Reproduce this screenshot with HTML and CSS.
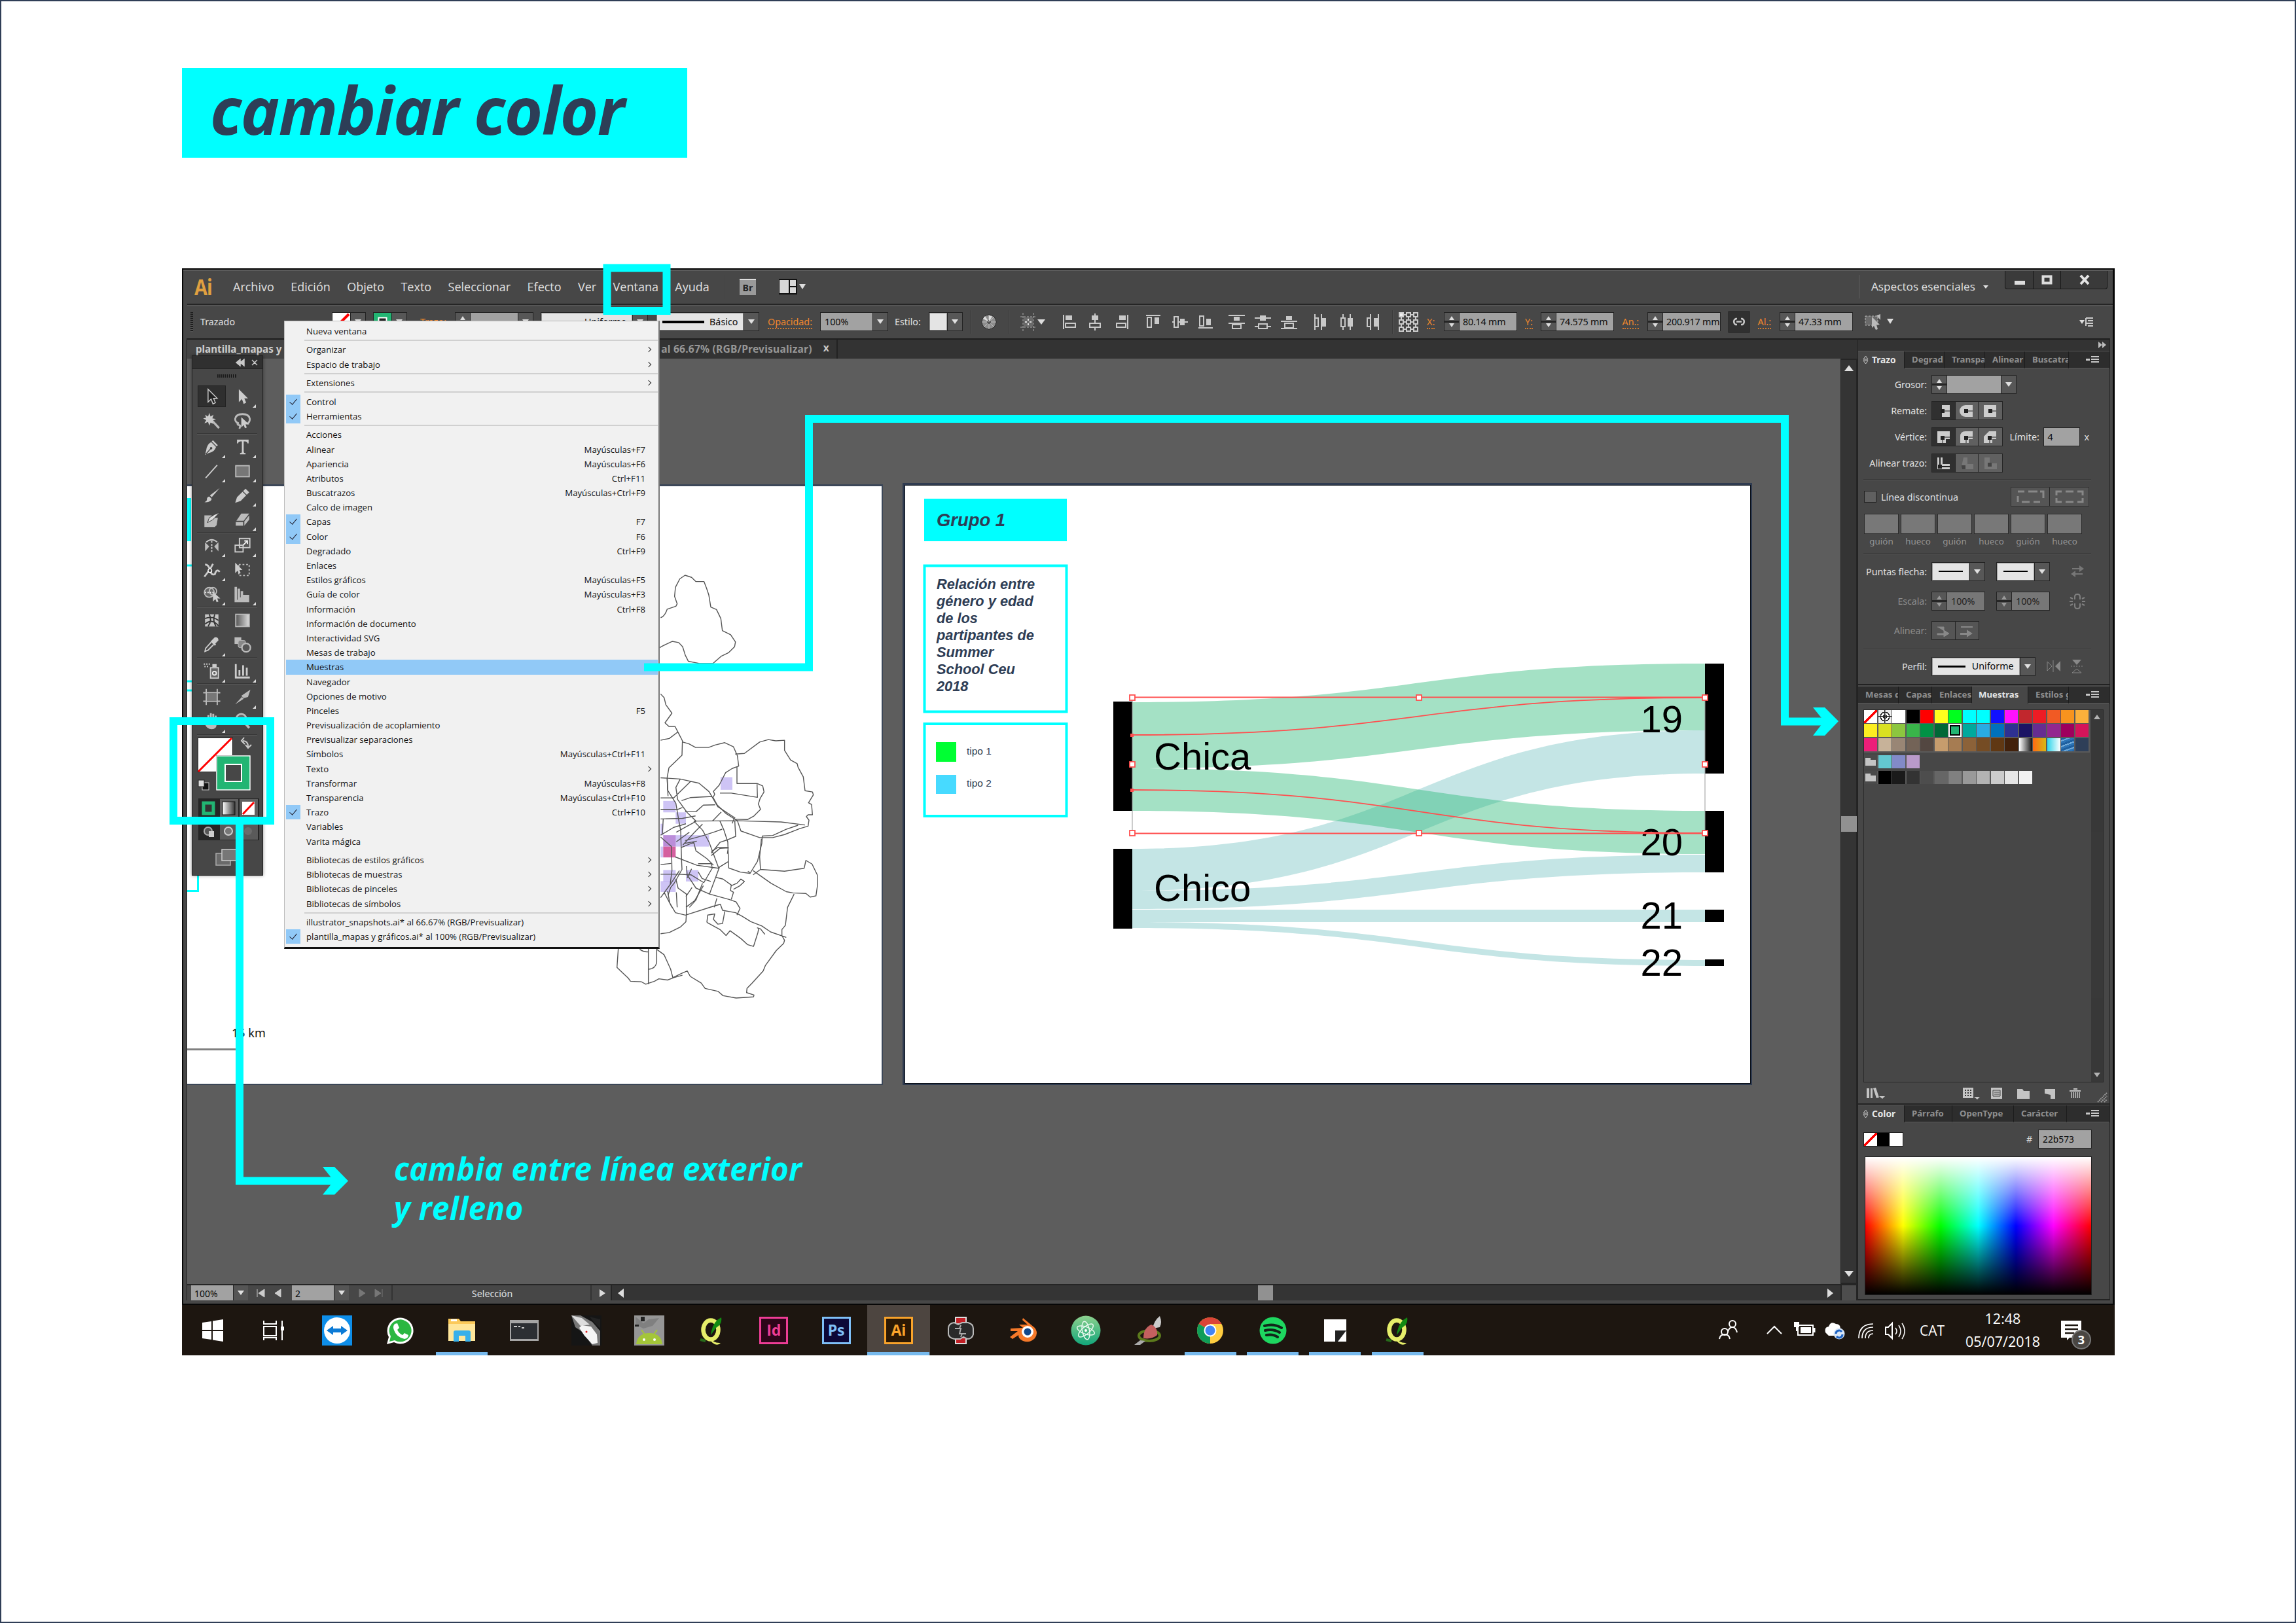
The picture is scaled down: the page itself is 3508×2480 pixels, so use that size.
FILE: index.html
```html
<!DOCTYPE html>
<html lang="es">
<head>
<meta charset="utf-8">
<title>cambiar color</title>
<link rel="stylesheet" href="styles.css">
</head>
<body>
<main class="page">
<h1 class="title"><span>cambiar color</span></h1>

<section class="app">
<div class="window">
  <header class="menubar">
    <span class="logo">Ai</span>
    <nav class="menus"><span>Archivo</span><span>Edición</span><span>Objeto</span><span>Texto</span><span>Seleccionar</span><span>Efecto</span><span>Ver</span><span>Ventana</span><span>Ayuda</span></nav>
    <i class="rule"></i>
    <span class="bridge">Br</span>
    <svg class="arrange" width="46" height="26" viewBox="0 0 46 26"><rect x="1" y="1" width="28" height="24" fill="#111"/><rect x="2" y="3" width="14" height="20" fill="#d8d8d8"/><rect x="18" y="3" width="9" height="9" fill="#d8d8d8"/><rect x="18" y="14" width="9" height="9" fill="#d8d8d8"/><path d="M32 9h10l-5 8z" fill="#ddd"/></svg>
    <div class="workspace"><span>Aspectos esenciales</span><i class="dn small"></i></div>
    <div class="winbtns">
      <svg width="43" height="28"><rect x="14" y="15" width="16" height="6" fill="#ddd"/></svg>
      <svg width="42" height="28"><rect x="14.500" y="8.500" width="12" height="10" fill="none" stroke="#ddd" stroke-width="4"/></svg>
      <svg width="72" height="28"><path d="M30 7l12 13M42 7L30 20" stroke="#e4e4e4" stroke-width="4"/></svg>
    </div>
  </header>

  <div class="control">
    <i class="grip"></i>
    <span class="lbl">Trazado</span>
    <div class="combo"><svg width="27" height="26"><rect width="27" height="26" fill="#fff"/><path d="M2 25L25 2" stroke="#f00" stroke-width="4"/></svg><b><i class="dn"></i></b></div>
    <div class="combo"><svg width="27" height="26"><rect width="27" height="26" fill="#22b573"/><rect x="7.500" y="7.500" width="12" height="12" fill="#222" stroke="#fff" stroke-width="2"/></svg><b><i class="dn"></i></b></div>
    <span class="link">Trazo:</span>
    <div class="combo w120"><u class="spin"></u><em></em><b><i class="dn"></i></b></div>
    <div class="combo w164"><em class="white"><s></s>Uniforme</em><b><i class="dn"></i></b></div>
    <div class="combo w158"><em class="white"><s class="long"></s>Básico</em><b><i class="dn"></i></b></div>
    <span class="link">Opacidad:</span>
    <div class="combo w104"><em>100%</em><b><i class="dn"></i></b></div>
    <span class="lbl">Estilo:</span>
    <div class="combo w52"><em class="white"></em><b><i class="dn"></i></b></div>
    <i class="rule"></i>
    <svg width="28" height="28" viewBox="0 0 28 28"><circle cx="14" cy="14" r="11" fill="#8d8d8d" stroke="#222"/><path d="M14 3v22M3 14h22M6 6l16 16M22 6L6 22" stroke="#bbb"/><circle cx="14" cy="14" r="3" fill="#555"/><path d="M14 14V4l5 1.500zM14 14L5 9l3-4z" fill="#ddd"/></svg>
    <i class="rule"></i>
    <svg width="44" height="28" viewBox="0 0 44 28"><path d="M7 0v28M23 0v28M3 6h24M3 22h24" stroke="#aaa" stroke-dasharray="3 2"/><rect x="8" y="7" width="14" height="14" fill="#6a6a6a"/><path d="M15 9v3M15 16v3M10 14h3M17 14h3" stroke="#ddd" stroke-width="2"/><path d="M29 10h12l-6 8z" fill="#ddd"/></svg>
    <svg class="aligns" width="500" height="28" viewBox="1616 476 500 28">
      <g fill="#c9c9c9"><rect x="1624" y="479" width="2" height="22"/><rect x="1628" y="480" width="10" height="7"/><rect x="1672" y="477" width="2" height="26"/><rect x="1668" y="480" width="10" height="7"/><rect x="1722" y="479" width="2" height="22"/><rect x="1710" y="480" width="10" height="7"/><rect x="1751" y="479" width="22" height="2"/><rect x="1764" y="483" width="7" height="10"/><rect x="1791" y="489" width="24" height="2"/><rect x="1803" y="485" width="7" height="10"/><rect x="1831" y="498" width="22" height="2"/><rect x="1843" y="485" width="7" height="10"/><rect x="1877" y="479" width="25" height="2"/><rect x="1877" y="491" width="25" height="2"/><rect x="1885" y="482" width="9" height="6"/><rect x="1917" y="483" width="25" height="2"/><rect x="1917" y="496" width="25" height="2"/><rect x="1925" y="480" width="9" height="8"/><rect x="1957" y="488" width="25" height="2"/><rect x="1957" y="499" width="25" height="2"/><rect x="1965" y="481" width="9" height="6"/><rect x="2008" y="478" width="2" height="24"/><rect x="2018" y="478" width="2" height="24"/><rect x="2020" y="484" width="6" height="13"/><rect x="2051" y="478" width="2" height="24"/><rect x="2062" y="478" width="2" height="24"/><rect x="2059" y="484" width="8" height="13"/><rect x="2093" y="478" width="2" height="24"/><rect x="2105" y="478" width="2" height="24"/><rect x="2099" y="484" width="6" height="13"/></g>
      <g fill="#474747" stroke="#c9c9c9" stroke-width="2"><rect x="1628" y="492" width="15" height="6"/><rect x="1665" y="492" width="16" height="6"/><rect x="1706" y="492" width="14" height="6"/><rect x="1753" y="483" width="6" height="15"/><rect x="1794" y="482" width="6" height="16"/><rect x="1833" y="481" width="6" height="15"/><rect x="1883" y="494" width="13" height="6"/><rect x="1923" y="493" width="13" height="7"/><rect x="1963" y="492" width="13" height="7"/><rect x="2009" y="484" width="5" height="13"/><rect x="2049" y="484" width="6" height="13"/><rect x="2089" y="484" width="5" height="13"/></g>
    </svg>
    <i class="rule"></i>
    <svg width="32" height="32" viewBox="0 0 32 32"><path d="M5 5h22v22H5zM16 5v22M5 16h22" fill="none" stroke="#ccc" stroke-width="2"/><g fill="#444" stroke="#ccc" stroke-width="2"><rect x="2" y="2" width="6" height="6" fill="#eee"/><rect x="13" y="2" width="6" height="6"/><rect x="24" y="2" width="6" height="6"/><rect x="2" y="13" width="6" height="6"/><rect x="13" y="13" width="6" height="6"/><rect x="24" y="13" width="6" height="6"/><rect x="2" y="24" width="6" height="6"/><rect x="13" y="24" width="6" height="6"/><rect x="24" y="24" width="6" height="6"/></g></svg>
    <span class="link">X:</span>
    <div class="combo w112"><u class="spin"></u><em>80.14 mm</em></div>
    <span class="link">Y:</span>
    <div class="combo w112"><u class="spin"></u><em>74.575 mm</em></div>
    <span class="link">An.:</span>
    <div class="combo w112"><u class="spin"></u><em>200.917 mm</em></div>
    <svg width="34" height="34" viewBox="0 0 34 34"><rect x="1" y="1" width="32" height="32" fill="#303030" stroke="#222"/><path d="M14 12h-2a5 5 0 0 0 0 9h2M20 12h2a5 5 0 0 1 0 9h-2M13 16.500h8" fill="none" stroke="#c8c8c8" stroke-width="2.500"/></svg>
    <span class="link">Al.:</span>
    <div class="combo w112"><u class="spin"></u><em>47.33 mm</em></div>
    <svg width="56" height="30" viewBox="0 0 56 30"><rect x="2" y="6" width="19" height="14" fill="#6a6a6a" stroke="#bbb" stroke-dasharray="3 2"/><path d="M12 7l12 12h-5l2 7-3 1-3-6-3 3zM19 5l6-2v9z" fill="#bbb"/><path d="M35 10h10l-5 8z" fill="#ddd"/></svg>
    <svg width="24" height="20" viewBox="0 0 24 20"><path d="M0 7h8l-4 6z" fill="#ddd"/><path d="M10 4h11M13 8h8M10 12h11M13 16h8M10 4v12" stroke="#ccc" stroke-width="2"/></svg>
  </div>

  <div class="main">
    <div class="doc">
      <div class="doctabs"><div class="doctab on">plantilla_mapas y</div><div class="doctab"><span>al 66.67% (RGB/Previsualizar)</span><b>x</b></div></div>
      <div class="view">
        <svg class="canvas" width="2526" height="1414" viewBox="286 548 2526 1414">
          <rect x="280" y="740" width="1069" height="918" fill="#3b4657"/>
          <rect x="280" y="743" width="1067" height="913" fill="#fff"/>
          <path d="M280 794h12" stroke="#0ff" stroke-width="66"/>
          <path d="M280 864h14M280 1041h14M280 1055h14M280 1361.500h22.500V1330" fill="none" stroke="#0ff" stroke-width="3"/>
          <path d="M280 1603.500h82" stroke="#808080" stroke-width="3"/>
          <text x="354" y="1585" class="km">15 km</text>
          <g class="map" transform="translate(900 840) scale(.33333 .45914)">
            <g fill="#8b72e8" fill-opacity=".42" stroke="none"><rect x="603" y="757" width="54" height="42"/><rect x="340" y="836" width="57" height="38"/><rect x="397" y="874" width="47" height="38"/><rect x="328" y="912" width="12" height="38"/><rect x="340" y="950" width="210" height="38"/><rect x="328" y="988" width="12" height="36"/><rect x="340" y="1066" width="57" height="38"/><rect x="444" y="1066" width="57" height="38"/><rect x="328" y="1103" width="69" height="36"/></g>
            <rect x="340" y="950" width="57" height="38" fill="#a03cb0" fill-opacity=".4" stroke="none"/><rect x="340" y="988" width="57" height="36" fill="#d5609f" stroke="none"/>
            <path d="M328 226q18-3 30-28l40-10 6-8-12-25 4-30 20-28 24-12 30 7 20 14 37 0 12 23 10 22 9 40 26 8 20 30 7 40 38 14 22 24-4 16-28 20-34 12-38 24-60 0-52-8-14-20-12-28-18-14-30-4-40 14-30 12"/>
            <path d="M328 480l16 12 8 24 28 28-32 32 18 12 28 0 20 28 14 20-2 48-34 24-26 18-8 32 2 42 38 44 14 60 8 30 4 100 2 30-34 44-18 16-12 26M328 634l40-6 40-22M430 640l28 6 30 12 60 0 30-8 44-8 40 14 18 30 6 34-30 8-30 14-30 42-26 20 6 10-8 10 20 26 40 28 52 24 16 34 86 22 60 0 54-10 70-20 38-8 4-20-12-12 8-6 20 0-4-34-14-6 22-26-4-10-34-4-8-46-24-32-4-12-30-12-28-32 0-34-40 2-34-4-40 8-70 38-42 2"/>
            <path d="M678 722l0 56 92 0 26 8 6 20-18 22-8 18 10 18-30 22-30 12-56-1M770 780l2 44-120-14-52 0M328 759l90 4 86 14 46 28 40 50 80 38M328 826l60 0 76-54M418 763l-20 28 8 40 44 44 40 28M424 835l40-10 100-4M328 864l80 0 20-6M440 872l50 0 34-22 54-1M328 896l100-2 60-8M328 950l60-26 56-12M400 940l50-20 40-16M430 983l50-40 40-30M440 968l90-18 50-12 30-8M434 978l60-8M480 903l200-1 200 4 110 10M480 903l40 30 30 40 44 86M600 903l18 30 18 40 4 86 54 14 44 4 34-40 20-60 2-24 48-2 60-20 56-14M560 1010l40-36 32-8 40-12-4-50M560 1018l40-24 38-2-4 20M566 903l40-30"/>
            <path d="M328 956l50 32M420 992l60-18 10 28 50 26 30 22M378 988l2 80-8 44M394 1022l100 28 100 10M328 1048l48-4M328 1080l80 0 60 2 58 26 40-50M446 1052l4 30 40 44 62 20 46-90 40-18M470 1062l-20 30M500 1072l18 22 40 10M360 1136l10 40 26 32 46 8 130-30 30-6 10 20 60 8 30 12 40 18 50 14 40 20 72 18M446 1216l0-70-38-20-10-30M444 1190l40-22 40-50M404 1190l-4-50M328 1278l40-4 50-18 26-18 2-24M328 1158l50-50 36-40M344 1140l36 50M472 1124l-28 30M552 1146l90 18 32 8 18 22-14 22M586 1160l-12 30M652 1164l10-24-14-6 4-18-38-20-34-6M662 1130l30-12 20-14-16-8-18 14-26 8M540 1240l4-24 32-4-6 18 20 16 22-2 10-40M540 1240l60 24 28 20 18-16 50 26 30 20 28 6 20-46 4-14M752 1082l34-18 110 6 90-10 8-26 28 12 24 36 2 30-8 40-26 4-20-12-60-2-30-4-70-28-82-42M940 1146l-30 44-10 60-16 14 0 20 12 16-4 10-34 24-50 50-10 18-50 40-24 18-2 14 34 8-2 6-80 4-60-8-22-14-60-10-18-18-50-22-14-18-26 8-40 14-10-28-30-48-34-18M786 1066l-4-44 8-60M740 1076l-12-6M770 1258l16 4 20 18"/>
            <path d="M134 1328l-6 62 14 10 38 26 10 10 50 2 20 8 40-10 20-8 40 4 28-8 40-8M232 1330q20 10 40 8M272 1328v118M310 1328v46q-6 20-36 22"/>
            <path d="M340 896l-4 50M358 760l4 60M460 940l-60 32M560 1005l30-14 50 0M666 893l-10 18M460 1190l30-24 30-56M500 1045l60 0 4 10"/>
          </g>
          <rect x="1379" y="738" width="1298" height="920" fill="#2f3b50"/>
          <rect x="1382.500" y="741.500" width="1292" height="914" fill="#fff" stroke="#0a0f18"/>
          <rect x="1412" y="762" width="218" height="65" fill="#0ff"/>
          <g class="bi"><text x="1431" y="804" font-size="27.500" textLength="105">Grupo 1</text>
          <g font-size="21.800"><text x="1431" y="900">Relación entre</text><text x="1431" y="926">género y edad</text><text x="1431" y="952">de los</text><text x="1431" y="978">partipantes de</text><text x="1431" y="1004">Summer</text><text x="1431" y="1030">School Ceu</text><text x="1431" y="1056">2018</text></g></g>
          <g fill="none" stroke="#0ff" stroke-width="4"><rect x="1412.500" y="864.500" width="217" height="223"/><rect x="1412.500" y="1106" width="217" height="141"/></g>
          <rect x="1430" y="1134" width="31" height="30" fill="#0f3"/><rect x="1430" y="1184" width="31" height="29" fill="#47daff"/>
          <g class="tipo"><text x="1477" y="1153">tipo 1</text><text x="1477" y="1202">tipo 2</text></g>
          <g fill="#6cbebe" fill-opacity=".4">
            <path d="M1730 1297C2167 1297 2167 1116 2605 1116V1182C2167 1182 2167 1361 1730 1361z"/>
            <path d="M1730 1361C2167 1361 2167 1306 2605 1306V1333C2167 1333 2167 1389 1730 1389z"/>
            <path d="M1730 1390H2605V1409H1730z"/>
            <path d="M1730 1409C2167 1409 2167 1467 2605 1467V1476C2167 1476 2167 1418 1730 1418z"/>
          </g>
          <g fill="#22b573" fill-opacity=".41">
            <path d="M1730 1073C2167 1073 2167 1014 2605 1014V1116C2167 1116 2167 1174 1730 1174z"/>
            <path d="M1730 1174C2167 1174 2167 1239 2605 1239V1305C2167 1305 2167 1239 1730 1239z"/>
          </g>
          <g fill="#000"><rect x="1701" y="1072" width="29" height="167"/><rect x="1701" y="1297" width="29" height="122"/><rect x="2605" y="1014" width="29" height="168"/><rect x="2605" y="1239" width="29" height="94"/><rect x="2605" y="1390" width="29" height="19"/><rect x="2605" y="1466" width="29" height="10"/></g>
          <g class="names"><text x="1763" y="1176">Chica</text><text x="1763" y="1377">Chico</text><g text-anchor="end"><text x="2571" y="1119">19</text><text x="2571" y="1307">20</text><text x="2571" y="1419">21</text><text x="2571" y="1491">22</text></g></g>
          <g fill="none" stroke="#ff4f4f" stroke-width="1.800"><path d="M1730 1065.500H2605M1730 1273.500H2605M1730 1123C2167 1123 2167 1066 2605 1066M1730 1207C2167 1207 2167 1273 2605 1273"/><path d="M1730 1065V1273M2605 1065V1273" stroke="#999" stroke-width="1"/>
          <g fill="#fff"><rect x="1726" y="1062" width="8" height="8"/><rect x="2164" y="1062" width="8" height="8"/><rect x="2601" y="1062" width="8" height="8"/><rect x="1726" y="1164" width="8" height="8"/><rect x="2601" y="1164" width="8" height="8"/><rect x="1726" y="1269" width="8" height="8"/><rect x="2164" y="1269" width="8" height="8"/><rect x="2601" y="1269" width="8" height="8"/></g></g>
          <rect x="1727" y="1121" width="5" height="5" fill="#ff4f4f"/><rect x="1727" y="1205" width="5" height="5" fill="#ff4f4f"/>
        </svg>
        <div class="vscroll"><i class="up"></i><b></b><i class="dn"></i></div>
      </div>
      <div class="status">
        <div class="zoomf">100%</div><b class="box"><i class="dn"></i></b>
        <svg class="nav1" width="67" height="24"><path d="M14 6v12M25 6l-9 6 9 6zM50 6l-9 6 9 6z" fill="#ccc" stroke="#ccc"/></svg>
        <div class="pagef">2</div><b class="box"><i class="dn"></i></b>
        <svg class="nav2" width="65" height="24"><path d="M16 6l9 6-9 6zM40 6l9 6-9 6zM51 6v12" fill="#777" stroke="#777"/></svg>
        <div class="mode">Selección</div>
        <svg class="nav3" width="29" height="24"><path d="M12 6l9 6-9 6z" fill="#ddd"/></svg>
        <div class="hscroll"><svg width="20" height="24"><path d="M18 5l-9 7 9 7z" fill="#ddd"/></svg><b></b><svg width="20" height="24"><path d="M0 5l9 7-9 7z" fill="#ddd"/></svg></div>
        <i class="corner"></i>
      </div>
    </div>

    <aside class="dock">
      <div class="dockbar"><svg width="14" height="10"><path d="M1 0l6 5-6 5zM7 0l6 5-6 5z" fill="#bbb"/></svg></div>
      <section class="panel stroke">
        <div class="tabs t1"><b class="on"><svg width="9" height="14"><path d="M1 6l3.500-5L8 6zM1 8l3.500 5L8 8z" fill="none" stroke="#ccc"/></svg>Trazo</b><b>Degrad</b><b>Transpa</b><b>Alinear</b><b>Buscatra</b><i class="burger"></i></div>
        <div class="prow h40"><label>Grosor:</label><div class="combo w130"><u class="spin"></u><em></em><b><i class="dn"></i></b></div></div>
        <div class="prow h40"><label>Remate:</label><div class="seg"><b class="on"><svg width="24" height="20"><path d="M10 1h12v18H10z" fill="#ccc"/><path d="M9 10h13" stroke="#222"/><rect x="8" y="7" width="6" height="6" fill="#222"/></svg></b><b><svg width="24" height="20"><path d="M10 1h11v18H10a9 9 0 0 1 0-18z" fill="#ccc"/><path d="M10 10h11" stroke="#222"/><rect x="8" y="7" width="6" height="6" fill="#222"/></svg></b><b><svg width="24" height="20"><path d="M2 1h19v18H2z" fill="#ccc"/><path d="M11 10h10" stroke="#222"/><rect x="9" y="7" width="6" height="6" fill="#222"/></svg></b></div></div>
        <div class="prow h40"><label>Vértice:</label><div class="seg"><b class="on"><svg width="24" height="20"><path d="M3 1h19v12h-6v6H3z" fill="#ccc"/><path d="M22 10H11v9" fill="none" stroke="#222"/><rect x="8" y="8" width="6" height="6" fill="#222"/></svg></b><b><svg width="24" height="20"><path d="M10 1h11v12h-6v6H2V9q0-8 8-8z" fill="#ccc"/><path d="M21 10H11v9" fill="none" stroke="#222"/><rect x="8" y="8" width="6" height="6" fill="#222"/></svg></b><b><svg width="24" height="20"><path d="M10 1h11v12h-6v6H2V9z" fill="#ccc"/><path d="M21 10H11v9" fill="none" stroke="#222"/><rect x="8" y="8" width="6" height="6" fill="#222"/></svg></b></div><span class="lim">Límite:</span><em class="fld f4">4</em><span class="x">x</span></div>
        <div class="prow h40"><label>Alinear trazo:</label><div class="seg"><b class="on"><svg width="24" height="20"><path d="M3 1h8v10h11v8H3z" fill="#ccc"/><path d="M7 1v14h15" fill="none" stroke="#222" stroke-width="2"/><rect x="4" y="12" width="6" height="6" fill="#222"/></svg></b><b><svg width="24" height="20"><path d="M7 1h6v10h9v8H3z" fill="#777"/><rect x="4" y="13" width="6" height="6" fill="#444"/></svg></b><b><svg width="24" height="20"><path d="M3 1h8v9h11v9H3z" fill="#777"/><rect x="8" y="9" width="6" height="6" fill="#444"/></svg></b></div></div>
        <hr>
        <div class="prow dash"><i class="check"></i><span>Línea discontinua</span><div class="seg off"><b><svg width="46" height="20"><path d="M4 18V9M4 2h10M20 2h14M38 2h5v10M10 18h12M28 18h10" fill="none" stroke="#888" stroke-width="3"/></svg></b><b><svg width="46" height="20"><path d="M3 8V2h8M3 12v6h8M17 2h12M17 18h12M35 2h8v6M35 18h8v-6" fill="none" stroke="#888" stroke-width="3"/></svg></b></div></div>
        <div class="gaps"><span>guión</span><span>hueco</span><span>guión</span><span>hueco</span><span>guión</span><span>hueco</span></div>
        <hr>
        <div class="prow h45"><label>Puntas flecha:</label><div class="combo w82"><em class="white"><s class="tip"></s></em><b><i class="dn"></i></b></div><div class="combo w82 second"><em class="white"><s class="tip"></s></em><b><i class="dn"></i></b></div><svg class="ic" width="24" height="24"><path d="M4 7h11V3l7 5-7 5v-4H4zM20 15H9v-4l-7 5 7 5v-4h11z" fill="#777"/></svg></div>
        <div class="prow h46 dim"><label>Escala:</label><div class="combo w82"><u class="spin"></u><em>100%</em></div><div class="combo w82 second"><u class="spin"></u><em>100%</em></div><svg class="ic" width="24" height="26"><path d="M8 10V6q0-4 4-4t4 4v4M8 16v4q0 4 4 4t4-4v-4M1 7l4 2M0 13h5M1 19l4-2M23 7l-4 2M24 13h-5M23 19l-4-2" fill="none" stroke="#808080" stroke-width="2"/></svg></div>
        <div class="prow h44 dim"><label>Alinear:</label><div class="seg"><b><svg width="24" height="20"><path d="M3 4h10v6M3 14h10v-5l8 5-8 5v-3H3z" fill="#888" stroke="#888"/></svg></b><b><svg width="24" height="20"><path d="M3 4h18M3 14h10v-4l6 4-6 4v-3H3z" fill="#888" stroke="#888" stroke-width="2"/></svg></b></div></div>
        <hr>
        <div class="prow h45"><label>Perfil:</label><div class="combo w159"><em class="white"><s class="mid"></s>Uniforme</em><b><i class="dn"></i></b></div><svg class="flip" width="60" height="24"><path d="M2 5l7 7-7 7zM11 3v18" fill="none" stroke="#888"/><path d="M22 4v16l-8-8z" fill="#888"/><path d="M40 2h14l-7 8z" fill="#888"/><path d="M38 12h18" stroke="#888" stroke-dasharray="2 2"/><path d="M40 22h14l-7-6z" fill="none" stroke="#888"/></svg></div>
      </section>

      <section class="panel swatches">
        <div class="tabs t2"><b>Mesas d</b><b>Capas</b><b>Enlaces</b><b class="on">Muestras</b><b>Estilos g</b><i class="burger"></i></div>
        <div class="swbody">
          <div class="swlist">
            <div class="grid">
              <i class="none"></i><i class="reg"></i><i style="background:#fff"></i><i style="background:#000"></i><i style="background:#f00"></i><i style="background:#ffff1e"></i><i style="background:#00ff1e"></i><i style="background:#0ff"></i><i style="background:#0ff"></i><i style="background:#1111ff"></i><i style="background:#ff11ff"></i><i style="background:#c1272d"></i><i style="background:#ed1c24"></i><i style="background:#f15a24"></i><i style="background:#f7931e"></i><i style="background:#fbb03b"></i>
              <i style="background:#fcee21"></i><i style="background:#d9e021"></i><i style="background:#8cc63f"></i><i style="background:#39b54a"></i><i style="background:#009245"></i><i style="background:#006837"></i><i class="sel"></i><i style="background:#00a99d"></i><i style="background:#29abe2"></i><i style="background:#0071bc"></i><i style="background:#2e3192"></i><i style="background:#1b1464"></i><i style="background:#662d91"></i><i style="background:#93278f"></i><i style="background:#9e005d"></i><i style="background:#d4145a"></i>
              <i style="background:#ed1e79"></i><i style="background:#c7b299"></i><i style="background:#998675"></i><i style="background:#736357"></i><i style="background:#534741"></i><i style="background:#c69c6d"></i><i style="background:#a67c52"></i><i style="background:#8c6239"></i><i style="background:#754c24"></i><i style="background:#603813"></i><i style="background:#42210b"></i><i style="background:linear-gradient(90deg,#fff,#111)"></i><i style="background:linear-gradient(90deg,#ff6a13,#d8b813)"></i><i style="background:linear-gradient(90deg,#2fd5ea,#fff)"></i><i style="background:repeating-linear-gradient(160deg,#1d5f9f 0 3px,#6fa9d8 3px 5px,#2b73b5 5px 8px)"></i><i style="background:#2e3f58"></i>
            </div>
            <div class="grid short"><i class="folder"></i><i style="background:#63c7d0"></i><i style="background:#828ac8"></i><i style="background:#b99aca"></i></div>
            <div class="grid short"><i class="folder"></i><i style="background:#000"></i><i style="background:#1a1a1a"></i><i style="background:#333"></i><i style="background:#4d4d4d"></i><i style="background:#666"></i><i style="background:#808080"></i><i style="background:#999"></i><i style="background:#b3b3b3"></i><i style="background:#ccc"></i><i style="background:#e6e6e6"></i><i style="background:#f2f2f2"></i></div>
          </div>
          <div class="swscroll"><i class="up"></i><i class="dn"></i></div>
        </div>
        <svg class="swfoot" width="384" height="28" viewBox="2840 1655 384 28">
          <g fill="#c4c4c4"><rect x="2853" y="1661" width="4" height="15"/><rect x="2859" y="1661" width="3" height="15"/><path d="M2863 1661l4-1 5 15-4 1zM2872 1673h9l-4 4z"/><rect x="3000" y="1660" width="16" height="16"/><path d="M3017 1674h9l-4 4z"/><rect x="3043" y="1660" width="17" height="17"/><path d="M3083 1662h8l2 3h9v12h-19z"/><path d="M3125 1662h16v15h-7v-6l-9-2z"/><path d="M3163 1664h17v2h-17zM3169 1661h6v2h-6z"/></g>
          <path d="M3003 1664h11M3003 1668h11M3003 1672h11" stroke="#333" stroke-width="2" stroke-dasharray="2 2"/><path d="M3046 1664h11v9h-11zM3048 1667h8M3048 1670h8" fill="none" stroke="#444"/>
          <path d="M3166 1667v9M3169 1667v9M3172 1667v9M3175 1667v9M3178 1667v9" stroke="#c4c4c4" stroke-width="1.500"/><path d="M3206 1682L3220 1668M3211 1682l9-9M3216 1682l4-4" stroke="#999" stroke-dasharray="2 1" stroke-width="2"/>
        </svg>
      </section>

      <section class="panel color">
        <div class="tabs t3"><b class="on"><svg width="9" height="14"><path d="M1 6l3.500-5L8 6zM1 8l3.500 5L8 8z" fill="none" stroke="#ccc"/></svg>Color</b><b>Párrafo</b><b>OpenType</b><b>Carácter</b><i></i><i class="burger"></i></div>
        <div class="colrow"><div class="quick"><i class="none"></i><i class="k"></i><i class="w"></i></div><span>#</span><em class="fld">22b573</em></div>
        <div class="spectrum"></div>
      </section>
    </aside>
  </div>
</div>

<footer class="taskbar">
  <div class="icons">
    <span><svg viewBox="0 0 46 46"><path d="M7 11l14-2v13H7zM23 8.500L39 6v16H23zM7 24h14v13L7 35zM23 24h16v16l-16-2.500z" fill="#fff"/></svg></span>
    <span><svg viewBox="0 0 46 46"><path d="M6 8v5h19V8M6 17h19v14H6zM6 38v-4h19v4M34 8v30" fill="none" stroke="#fff" stroke-width="2"/><rect x="32" y="17" width="5" height="6" fill="#fff"/></svg></span>
    <span><svg viewBox="0 0 46 46"><rect width="46" height="46" fill="#0e8ee9"/><circle cx="23" cy="23" r="20" fill="#fff"/><path d="M7 23l10-7v4h12v-4l10 7-10 7v-4H17v4z" fill="#0c7bd6"/></svg></span>
    <span><svg viewBox="0 0 46 46"><path d="M3 44l3-11A20 20 0 1 1 14 41z" fill="#fff"/><path d="M7 40l2-8a17 17 0 1 1 6 6z" fill="#2bb741"/><path d="M15 13l4-1 3 7-3 3q3 6 8 8l3-3 6 3q0 5-6 6-14-3-17-17 0-4 2-6z" fill="#fff"/></svg></span>
    <span class="run"><svg viewBox="0 0 46 46"><path d="M2 5h16l3 4h22v30H2z" fill="#fbc95a"/><path d="M2 13h41v26H2z" fill="#ffe69a"/><path d="M6 6h9v3H6z" fill="#fff"/><path d="M10 40V26q0-3 3-3h20q3 0 3 3v14h-8v-9H18v9z" fill="#38b0ea"/></svg></span>
    <span><svg viewBox="0 0 46 46"><rect x="1" y="7" width="44" height="32" fill="#a5a5a5"/><rect x="3" y="12" width="40" height="24" fill="#2c2f33"/><path d="M7 17h5M14 17h3M19 19h4" stroke="#ccc" stroke-width="2"/></svg></span>
    <span><svg viewBox="0 0 46 46"><rect width="46" height="46" fill="#151515"/><path d="M0 0h14l18 10 12 14v22H32L18 26 6 18z" fill="#777"/><path d="M0 0l16 4 12 10-14 2z" fill="#ddd"/><path d="M16 15l14 2 9 12 1 13-8 2-12-13-8-12z" fill="#f4f4f4"/><path d="M28 2l16 4v14L34 10z" fill="#222"/><circle cx="23" cy="25" r="1.500" fill="#d22"/></svg></span>
    <span><svg viewBox="0 0 46 46"><rect width="46" height="46" fill="#969696"/><path d="M2 2l12 10 8-6 16-2-10 12-14 4-12-6z" fill="#808080"/><path d="M10 2h6v7h-6zM1 14h6v3H1z" fill="#222"/><path d="M3 44q2-17 20-17t20 17z" fill="#a4c639"/><path d="M11 22l5 7M35 22l-5 7" stroke="#a4c639" stroke-width="2"/><circle cx="15" cy="37" r="2" fill="#fff"/><circle cx="31" cy="37" r="2" fill="#fff"/></svg></span>
    <span><svg viewBox="0 0 46 46"><ellipse cx="22" cy="22" rx="11.500" ry="14.500" fill="none" stroke="#e6ee6a" stroke-width="6.500"/><path d="M20 33q6 10 17 9-3 4-9 2-6-3-8-9" fill="#e6ee6a"/><path d="M22 30Q24 10 38 3q2 10-8 16z" fill="#128a12"/><path d="M6 37l8 2" stroke="#276b1a" stroke-width="4"/></svg></span>
    <span><b class="adobe id">Id</b></span>
    <span><b class="adobe ps">Ps</b></span>
    <span class="run active"><b class="adobe ai">Ai</b></span>
    <span><svg viewBox="0 0 46 46"><path d="M15 3h16v10H15zM15 34h16v9H15z" fill="#c22026" stroke="#ddd" stroke-width="2"/><path d="M4 20q0-8 9-9l6 3 6-3h9q8 2 8 9v9q-2 7-9 7l-6-3-5 3h-9q-9-2-9-8z" fill="#2a2a2a" stroke="#bbb" stroke-width="2"/><path d="M14 20h9l-2 8h10M23 15l-2 5M25 28l-2 5" stroke="#aaa" stroke-width="2" fill="none"/></svg></span>
    <span><svg viewBox="0 0 46 46"><path d="M22 4l18 15q6 8 0 16-8 8-18 4-7-3-7-9L6 36l-4-3 12-9H3v-4l19-1-6-5h13l-8-7z" fill="#f5792a"/><circle cx="29" cy="25" r="9" fill="#fff"/><circle cx="29" cy="25" r="5.500" fill="#12488c"/></svg></span>
    <span><svg viewBox="0 0 46 46"><defs><linearGradient id="at" x2="0" y2="1"><stop stop-color="#8dd18e"/><stop offset="1" stop-color="#12a67a"/></linearGradient></defs><circle cx="23" cy="23" r="22.500" fill="url(#at)"/><g fill="none" stroke="#e8f8ee" stroke-width="1.500"><ellipse cx="23" cy="23" rx="14" ry="5.500" transform="rotate(20 23 23)"/><ellipse cx="23" cy="23" rx="14" ry="5.500" transform="rotate(80 23 23)"/><ellipse cx="23" cy="23" rx="14" ry="5.500" transform="rotate(140 23 23)"/></g><circle cx="23" cy="23" r="2" fill="#fff"/></svg></span>
    <span><svg viewBox="0 0 46 46"><ellipse cx="25" cy="31" rx="16" ry="8" fill="none" stroke="#5c7a1c" stroke-width="4"/><path d="M41 1q4 10 0 17l-11 2q2-12 11-19z" fill="#ccc"/><path d="M28 14q10 4 9 16-8 7-21 5 0-16 12-21z" fill="#c4605f"/><path d="M2 45l9-7 8 1-8 6z" fill="#aaa"/></svg></span>
    <span class="run"><svg viewBox="0 0 46 46"><circle cx="23" cy="23" r="20" fill="#ffcd40"/><path d="M23 23L5.700 13A20 20 0 0 1 40.300 13H23z" fill="#db4437"/><path d="M23 23l0 20A20 20 0 0 1 5.700 13z" fill="#0f9d58"/><path d="M23 23h8l-8 20z" fill="#ffcd40"/><circle cx="23" cy="23" r="9.500" fill="#fff"/><circle cx="23" cy="23" r="7.500" fill="#4285f4"/></svg></span>
    <span class="run"><svg viewBox="0 0 46 46"><circle cx="23" cy="23" r="20.500" fill="#1ed760"/><path d="M10 16q14-4 26 3M11 23q12-3 22 3M13 30q10-2 17 3" fill="none" stroke="#11271a" stroke-width="4" stroke-linecap="round"/></svg></span>
    <span class="run"><svg viewBox="0 0 46 46"><path d="M6 6h34v34H6z" fill="#fff"/><path d="M23 23h17L27 40h-4z" fill="#222"/></svg></span>
    <span class="run"><svg viewBox="0 0 46 46"><ellipse cx="22" cy="22" rx="11.500" ry="14.500" fill="none" stroke="#e6ee6a" stroke-width="6.500"/><path d="M20 33q6 10 17 9-3 4-9 2-6-3-8-9" fill="#e6ee6a"/><path d="M22 30Q24 10 38 3q2 10-8 16z" fill="#128a12"/><path d="M6 37l8 2" stroke="#276b1a" stroke-width="4"/></svg></span>
  </div>
  <svg class="tray" width="300" height="77" viewBox="2630 1994 300 77">
    <g fill="none" stroke="#fff" stroke-width="2"><circle cx="2652" cy="2023" r="5"/><circle cx="2640" cy="2035" r="5"/><path d="M2645 2035q2-7 7-7t7 8M2632 2046q1-7 8-7t8 7"/><path d="M2705 2038l11-11 11 11"/><rect x="2752" y="2025" width="23" height="15"/><path d="M2777 2029v7" stroke-width="3"/><path d="M2845 2045q0-22 22-22M2850 2045q0-17 17-17M2855 2045q0-12 12-12M2860 2045q0-7 7-7" stroke-width="1.700"/><path d="M2886 2028h4l6-6v23l-6-6h-4z"/><path d="M2901 2029q4 5 0 10M2906 2025q6 9 0 18M2911 2022q8 12 0 24" stroke-width="1.500"/></g>
    <rect x="2756" y="2028" width="16" height="9" fill="#fff"/><path d="M2746 2020h8v8h-3v6h-2v-6h-3z" fill="#fff"/><path d="M2794 2036q-2-8 5-9 3-9 11-4 8 0 7 10v8h-18z" fill="#fff"/><circle cx="2815" cy="2038" r="8.500" fill="#d9e6f7"/><path d="M2810 2038a5 5 0 0 1 9-3M2820 2039a5 5 0 0 1-9 3" stroke="#1d63c4" stroke-width="3" fill="none"/>
  </svg>
  <span class="lang">CAT</span>
  <div class="clock"><span>12:48</span><span>05/07/2018</span></div>
  <div class="notif"><svg width="34" height="30"><path d="M1 0h31v26H14l-4 4v-4H1z" fill="#fff"/><path d="M7 7h20M7 13h20M7 19h14" stroke="#1d1710" stroke-width="2.500"/></svg><b>3</b></div>
</footer>
</section>

<div class="tools">
  <div class="toolhead"><svg width="42" height="12"><path d="M9 1L3 6l6 5zM15 1L9 6l6 5zM27 2l8 8M35 2l-8 8" fill="#c8c8c8" stroke="#c8c8c8" stroke-width="1.500"/></svg></div>
  <i class="grip2"></i>
  <div class="tg">
    <span class="on"><svg viewBox="0 0 30 30"><path d="M9 3v21l5-5 3 8 4-2-3-7h6z" fill="#222" stroke="#ccc" stroke-width="1.500"/></svg></span>
    <span class="f"><svg viewBox="0 0 30 30"><path d="M9 3v21l5-5 3 8 4-2-3-7h6z" fill="#ccc"/></svg></span>
    <span><svg viewBox="0 0 30 30"><path d="M14 13l13 14" stroke="#bbb" stroke-width="3.500"/><path d="M11 2l2 6 5-3-2 6 6 1-6 3 2 5-5-2-2 5-2-6-6 2 3-5-5-3 5-1-2-5 5 3z" fill="#ccc"/></svg></span>
    <span><svg viewBox="0 0 30 30"><path d="M9 20q-6-3-6-8 1-8 12-8t12 8q0 5-4 8M8 17q-3 5 2 5 2 0 0 6" fill="none" stroke="#bbb" stroke-width="3"/><path d="M13 9v17l4-4 2 5 3-1-2-5h6z" fill="#ccc"/></svg></span>
  </div><hr>
  <div class="tg">
    <span class="f"><svg viewBox="0 0 30 30"><path d="M17 4l8 8-2 2-8-8zM14 7l8 8q-2 8-12 10l-6 3 2-8q1-9 8-13z" fill="#ccc"/><path d="M5 27l9-10" stroke="#444" stroke-width="1.500"/><circle cx="14" cy="17" r="2" fill="#444"/></svg></span>
    <span class="f"><svg viewBox="0 0 30 30"><path d="M6 3h19v6h-2q0-3-4-3h-2v17q0 2 3 2v2h-9v-2q3 0 3-2V6h-2q-4 0-4 3H6z" fill="#ccc"/></svg></span>
    <span class="f"><svg viewBox="0 0 30 30"><path d="M5 26L24 5" stroke="#ccc" stroke-width="2"/></svg></span>
    <span class="f"><svg viewBox="0 0 30 30"><rect x="4" y="6" width="22" height="18" fill="#777" stroke="#bbb" stroke-width="2"/></svg></span>
    <span><svg viewBox="0 0 30 30"><path d="M28 3L15 18l-3-3zM11 17l4 4q-2 6-12 5 5-2 4-5 1-4 4-4z" fill="#ccc"/></svg></span>
    <span class="f"><svg viewBox="0 0 30 30"><path d="M20 4l6 6-4 4-6-6zM15 9l6 6-9 9-9 3 3-9z" fill="#ccc"/></svg></span>
    <span><svg viewBox="0 0 30 30"><path d="M3 8h12v4l10 0-2 12-3 3H3z" fill="#bbb"/><path d="M28 3L17 15l-9 5 3-8 8-5z" fill="#ddd" stroke="#333"/></svg></span>
    <span class="f"><svg viewBox="0 0 30 30"><path d="M13 5h13l-9 12H5zM4 19h12v6H4zM18 18l8-10v7l-8 10z" fill="#bbb"/></svg></span>
  </div><hr>
  <div class="tg">
    <span class="f"><svg viewBox="0 0 30 30"><path d="M4 9l7 7-7 8zM26 9l-7 7 7 8z" fill="#bbb"/><path d="M15 7v20" stroke="#ccc" stroke-width="2" stroke-dasharray="3 2"/><path d="M6 9q9-8 18 0" fill="none" stroke="#ccc" stroke-width="2"/></svg></span>
    <span class="f"><svg viewBox="0 0 30 30"><rect x="10" y="3" width="17" height="15" fill="#555" stroke="#ccc" stroke-width="2"/><rect x="3" y="14" width="13" height="11" fill="none" stroke="#ccc" stroke-width="2"/><path d="M16 14l7-7m-5 0h5v5" fill="none" stroke="#eee" stroke-width="2"/></svg></span>
    <span class="f"><svg viewBox="0 0 30 30"><path d="M3 26l9-12 5-9M4 6q6 0 8 9t8 7q3-10 8-4" fill="none" stroke="#ccc" stroke-width="3"/><circle cx="12" cy="16" r="3" fill="#444" stroke="#fff" stroke-width="1.500"/></svg></span>
    <span><svg viewBox="0 0 30 30"><rect x="9" y="6" width="17" height="18" fill="none" stroke="#bbb" stroke-width="2" stroke-dasharray="3 3"/><path d="M3 3v17l4-4 2 5 3-1-2-5h5z" fill="#ccc"/></svg></span>
    <span class="f"><svg viewBox="0 0 30 30"><circle cx="11" cy="12" r="8" fill="#666" stroke="#bbb" stroke-width="2"/><circle cx="17" cy="10" r="6" fill="none" stroke="#bbb" stroke-width="2"/><path d="M4 12h14" stroke="#eee" stroke-width="2" stroke-dasharray="2 2"/><path d="M17 11v16l4-4 2 5 3-1-2-5h5z" fill="#ccc"/></svg></span>
    <span class="f"><svg viewBox="0 0 30 30"><path d="M4 3v23h22M9 6v16h17M14 10v8h12" fill="none" stroke="#bbb" stroke-width="4"/></svg></span>
  </div><hr>
  <div class="tg">
    <span><svg viewBox="0 0 30 30"><rect x="4" y="5" width="22" height="20" fill="#c4c4c4"/><path d="M4 12q11-5 22 3M4 21q12-10 22 3M11 5q5 10-2 20M20 5q-4 10 2 20" fill="none" stroke="#333" stroke-width="2"/></svg></span>
    <span><svg viewBox="0 0 30 30"><defs><linearGradient id="gr"><stop stop-color="#555"/><stop offset="1" stop-color="#ddd"/></linearGradient></defs><rect x="4" y="5" width="22" height="20" fill="url(#gr)" stroke="#bbb" stroke-width="2"/></svg></span>
    <span class="f"><svg viewBox="0 0 30 30"><path d="M20 3q6-1 6 5l-5 5 1 2-2 2-7-7 2-2z" fill="#ccc"/><path d="M14 11L5 21l-1 5 5-2 9-9" fill="none" stroke="#ccc" stroke-width="2"/></svg></span>
    <span><svg viewBox="0 0 30 30"><rect x="2" y="3" width="11" height="11" fill="#bbb"/><rect x="8" y="8" width="12" height="12" rx="3" fill="#888" stroke="#bbb"/><circle cx="21" cy="20" r="7" fill="#555" stroke="#bbb" stroke-width="2.500"/></svg></span>
  </div><hr>
  <div class="tg">
    <span class="f"><svg viewBox="0 0 30 30"><rect x="13" y="10" width="13" height="17" fill="#666" stroke="#ccc" stroke-width="2"/><rect x="16" y="4" width="7" height="5" fill="#ccc"/><circle cx="19.500" cy="19" r="3" fill="none" stroke="#eee" stroke-width="2"/><path d="M2 4h10M3 8h8" stroke="#ccc" stroke-width="2" stroke-dasharray="2 2"/></svg></span>
    <span class="f"><svg viewBox="0 0 30 30"><path d="M4 4v22h23M10 23V14M16 23V6M22 23V10" fill="none" stroke="#ccc" stroke-width="3"/></svg></span>
  </div><hr>
  <div class="tg">
    <span><svg viewBox="0 0 30 30"><path d="M1 8h28M1 22h28M6 2v26M24 2v26" stroke="#bbb" stroke-width="2"/><rect x="7" y="9" width="16" height="12" fill="#777"/></svg></span>
    <span class="f"><svg viewBox="0 0 30 30"><path d="M28 3l-4 12-7 2-4-4zM14 15l3 3L3 27z" fill="#bbb"/></svg></span>
    <span class="f"><svg viewBox="0 0 30 30"><path d="M8 14V5h3v8h1V2h3v11h1V3h3v11h1V6h3v14q0 8-8 8t-11-8l-3-5 3-1z" fill="#bbb"/></svg></span>
    <span><svg viewBox="0 0 30 30"><circle cx="13" cy="11" r="8" fill="#666" stroke="#bbb" stroke-width="3"/><path d="M18 17l8 9" stroke="#bbb" stroke-width="4"/></svg></span>
  </div><hr>
  <svg class="fillstroke" width="109" height="213" viewBox="293 1124 109 213">
    <rect x="302.500" y="1128.500" width="53" height="52" fill="#fff" stroke="#222"/><path d="M303 1180L354 1129" stroke="#f00" stroke-width="3"/>
    <path d="M330 1155h53v54h-53zM344 1169v26h26v-26z" fill="#222" fill-rule="evenodd"/><rect x="331" y="1156" width="51" height="52" fill="#22b573" stroke="#fff" stroke-width="1.500"/><rect x="344" y="1169" width="25" height="26" fill="#474747" stroke="#fff" stroke-width="2"/>
    <path d="M371 1133q8 0 8 9M373 1128l-4 5 5 5M375 1139l4 5 5-5" fill="none" stroke="#ccc" stroke-width="2"/>
    <rect x="309" y="1197" width="10" height="11" fill="#111" stroke="#ccc"/><rect x="303" y="1193" width="9" height="10" fill="#ddd" stroke="#222"/>
    <rect x="303" y="1221" width="93" height="29" fill="#262626"/><rect x="336" y="1222" width="28" height="27" fill="#606060"/><rect x="366" y="1222" width="28" height="27" fill="#606060"/>
    <rect x="311" y="1228" width="15" height="16" fill="#333" stroke="#22b573" stroke-width="5"/><rect x="340" y="1226" width="19" height="20" fill="url(#gr2)" stroke="#111"/><rect x="370" y="1226" width="19" height="20" fill="#fff"/><path d="M371 1245l17-18" stroke="#f00" stroke-width="3"/>
    <defs><linearGradient id="gr2"><stop stop-color="#fff"/><stop offset="1" stop-color="#333"/></linearGradient></defs>
    <rect x="303" y="1257" width="93" height="28" fill="#262626"/><rect x="336" y="1257" width="28" height="27" fill="#5a5a5a"/><rect x="366" y="1257" width="28" height="27" fill="#5a5a5a"/>
    <circle cx="318" cy="1271" r="6" fill="#555" stroke="#aaa" stroke-width="2"/><rect x="319" y="1271" width="8" height="9" fill="#ccc"/><circle cx="349" cy="1271" r="6" fill="#777" stroke="#ccc" stroke-width="2"/><circle cx="379" cy="1271" r="6" fill="#6c6c6c"/>
    <rect x="330" y="1305" width="22" height="18" fill="#6a6a6a" stroke="#aaa" stroke-width="1.500"/><rect x="339" y="1299" width="24" height="17" fill="#777" stroke="#ccc" stroke-width="1.500"/>
  </svg>
</div>

<ul class="dropdown">
<li>Nueva ventana</li><li class="sep line"></li>
<li class="sub">Organizar</li><li class="sub">Espacio de trabajo</li><li class="sep line"></li>
<li class="sub">Extensiones</li><li class="sep line"></li>
<li class="ck">Control</li><li class="ck">Herramientas</li><li class="sep line"></li>
<li>Acciones</li>
<li>Alinear<kbd>Mayúsculas+F7</kbd></li>
<li>Apariencia<kbd>Mayúsculas+F6</kbd></li>
<li>Atributos<kbd>Ctrl+F11</kbd></li>
<li>Buscatrazos<kbd>Mayúsculas+Ctrl+F9</kbd></li>
<li>Calco de imagen</li>
<li class="ck">Capas<kbd>F7</kbd></li>
<li class="ck">Color<kbd>F6</kbd></li>
<li>Degradado<kbd>Ctrl+F9</kbd></li>
<li>Enlaces</li>
<li>Estilos gráficos<kbd>Mayúsculas+F5</kbd></li>
<li>Guía de color<kbd>Mayúsculas+F3</kbd></li>
<li>Información<kbd>Ctrl+F8</kbd></li>
<li>Información de documento</li>
<li>Interactividad SVG</li>
<li>Mesas de trabajo</li>
<li class="hot">Muestras</li>
<li>Navegador</li>
<li>Opciones de motivo</li>
<li>Pinceles<kbd>F5</kbd></li>
<li>Previsualización de acoplamiento</li>
<li>Previsualizar separaciones</li>
<li>Símbolos<kbd>Mayúsculas+Ctrl+F11</kbd></li>
<li class="sub">Texto</li>
<li>Transformar<kbd>Mayúsculas+F8</kbd></li>
<li>Transparencia<kbd>Mayúsculas+Ctrl+F10</kbd></li>
<li class="ck">Trazo<kbd>Ctrl+F10</kbd></li>
<li>Variables</li>
<li>Varita mágica</li><li class="sep"></li>
<li class="sub">Bibliotecas de estilos gráficos</li>
<li class="sub">Bibliotecas de muestras</li>
<li class="sub">Bibliotecas de pinceles</li>
<li class="sub">Bibliotecas de símbolos</li><li class="sep line"></li>
<li>illustrator_snapshots.ai* al 66.67% (RGB/Previsualizar)</li>
<li class="ck">plantilla_mapas y gráficos.ai* al 100% (RGB/Previsualizar)</li>
</ul>

<svg class="callouts" width="3508" height="2480" viewBox="0 0 3508 2480">
  <g fill="none" stroke="#0ff" stroke-width="12">
    <rect x="927.500" y="409.500" width="91" height="65.500"/>
    <rect x="265" y="1102" width="148" height="152"/>
    <path d="M366 1258V1804.500H522"/>
    <path d="M984 1019.500H1236V640H2727V1102.500H2796"/>
  </g>
  <path d="M493 1783h18l21 21.500-21 21H493l17-21zM2770 1081h18l21 21-21 22h-18l17-22z" fill="#0ff"/>
</svg>
<p class="note"><span>cambia entre línea exterior</span><br><span>y relleno</span></p>
</main>
</body>
</html>
```
FILE: styles.css
```css
* { box-sizing: border-box; }
body { margin: 0; background: #fff; font-family: "Noto Sans", "Open Sans", sans-serif; }
ul, p, h1 { margin: 0; padding: 0; }
i, em, kbd { font-style: normal; font-family: inherit; }
u, s { text-decoration: none; }
svg { display: block; flex: none; }

.page { position: relative; width: 3508px; height: 2480px; overflow: hidden; border: 2px solid #2f3e57; padding: 102px 0 0 276px; }
.title { width: 772px; height: 137px; background: #0ff; color: #2d3e57; padding-left: 43px; font: italic 700 100px/126px "Open Sans", sans-serif; letter-spacing: -1.500px; white-space: nowrap; }

.app { width: 2953px; height: 1661px; margin-top: 169px; display: flex; flex-direction: column; }
.window { height: 1584px; background: #474747; border: solid #070707; border-width: 2px 3px 2px 2px; display: flex; flex-direction: column; color: #e0e0e0; font-size: 14.300px; }

.menubar { height: 52px; display: flex; align-items: center; border-top: 2px solid #5c5c5c; font: 18px/24px "Open Sans", sans-serif; position: relative; padding-bottom: 2px; }
.logo { width: 58px; margin-left: 17px; font: 700 34px/40px "Open Sans", sans-serif; letter-spacing: -1px; color: #e0a040; transform: scaleX(.85); transform-origin: 0 50%; }
.menus { display: flex; gap: 25.400px; width: 750px; margin-left: 1px; white-space: nowrap; }
.rule { width: 2px; height: 36px; background: #3a3a3a; border-right: 1px solid #555; display: block; flex: none; }
.bridge { width: 25px; height: 25px; margin-left: 22px; background: #9a9a9a; border-top: 2px solid #ddd; color: #222; font: 700 14px/24px "Open Sans", sans-serif; text-align: center; }
.arrange { margin-left: 34px; }
.workspace { margin-left: auto; margin-right: 20px; height: 36px; width: 203px; border-left: 1px solid #606060; padding-left: 18px; display: flex; align-items: center; gap: 12px; font-size: 17.200px; white-space: nowrap; }
.winbtns { align-self: flex-start; display: flex; height: 28px; width: 157px; margin-right: 8px; background: #3a3a3a; border: 1px solid #181818; border-top: 0; border-radius: 0 0 4px 4px; overflow: hidden; }
.winbtns svg { border-right: 1px solid #181818; }

.dn, .up { display: block; width: 0; height: 0; border: 5px solid transparent; flex: none; }
.dn { border-top: 7px solid #e0e0e0; border-bottom: 0; }
.up { border-bottom: 7px solid #e0e0e0; border-top: 0; }
.dn.small { border-width: 5px 4px 0; }

.control { height: 53px; border-top: 2px solid #252525; box-shadow: inset 0 2px #565656; margin-left: 6px; padding-left: 5px; display: grid; align-items: center; white-space: nowrap;
  grid-template-columns: 15px 201px 63px 72px 53px 131px 176px 171px 80px 114px 52px 63px 15px 43px 16px 60px 511px 9px 44px 26px 124px 24px 124.500px 38.500px 123px 45.500px 33.500px 129px 329px 40px; }
.grip { width: 4px; height: 30px; background: repeating-linear-gradient(#1e1e1e 0 2px, #555 2px 3px); }
.link { color: #f0882d; font-size: 14.300px; border-bottom: 2px dotted #d0782d; justify-self: start; line-height: 19px; margin-top: 2px; }
.combo { display: flex; height: 29px; width: 52px; border: 1.500px solid #232323; flex: none; }
.combo em, .fld { background: #a2a2a2; color: #0a0a0a; flex: 1; padding-left: 6px; font-size: 14.300px; line-height: 26px; display: flex; align-items: center; overflow: hidden; white-space: nowrap; }
.combo em.white { background: #e4e4e4; justify-content: space-evenly; padding: 0; box-shadow: inset 0 0 0 1px #999; }
.combo > b { width: 23px; background: #575757; border-left: 1.500px solid #232323; display: flex; align-items: center; justify-content: center; flex: none; }
.combo s { width: 48px; height: 4px; background: #000; }
.combo s.long { width: 64px; }
.combo s.tip { width: 37px; height: 2px; }
.combo s.mid { width: 42px; height: 3px; }
.w52 { width: 52px; } .w82 { width: 82px; } .w104 { width: 104px; } .w112 { width: 112px; } .w120 { width: 120px; } .w130 { width: 130px; } .w158 { width: 158px; } .w159 { width: 159px; } .w164 { width: 164px; }
.w112 em { padding-left: 5px; letter-spacing: -.2px; }
.spin { width: 23px; flex: none; background: linear-gradient(#575757 0 46%, #262626 46% 54%, #575757 54%); border-right: 1.500px solid #262626; display: flex; flex-direction: column; justify-content: space-evenly; align-items: center; }
.spin::before, .spin::after { content: ""; border: 4.500px solid transparent; }
.spin::before { border-bottom: 6px solid #ddd; border-top: 0; }
.spin::after { border-top: 6px solid #ddd; border-bottom: 0; }

.main { display: flex; height: 1470px; margin-left: 5px; }
.doc { width: 2553px; flex: none; border-left: 1px solid #222; }
.doctabs { height: 31px; background: #333; border-top: 2px solid #1f1f1f; display: flex; font: 700 15px/29px "Noto Sans", sans-serif; white-space: nowrap; }
.doctab { width: 994px; padding-right: 11px; border-right: 2px solid #222; }
.doctab.on { width: 480px; flex: none; overflow: hidden; background: #454545; color: #ccc; padding-left: 13px; font-size: 15.200px; }
.doctab:last-child { width: 514px; color: #969696; display: flex; justify-content: flex-end; gap: 17px; font-size: 15.600px; letter-spacing: .200px; }
.doctab:last-child b { color: #ccc; font-weight: 700; line-height: 25px; margin-right: 0; }
.view { display: flex; height: 1414px; }
.canvas { background: #5d5d5d; }
.canvas text { white-space: pre; }
.km { font: 18px "Noto Sans", sans-serif; fill: #111; }
.map path { fill: none; stroke: #555; stroke-width: 1.400px; vector-effect: non-scaling-stroke; stroke-linejoin: round; }
.bi { font-family: "Liberation Sans", sans-serif; font-weight: 700; font-style: italic; fill: #2e3d55; }
.tipo { font: 15.500px "Liberation Sans", sans-serif; fill: #2e3d55; }
.names { font: 58px "Liberation Sans", sans-serif; fill: #000; }
.vscroll { width: 26px; background: #343434; border: solid #252525; border-width: 2px 2px 2px 1px; display: flex; flex-direction: column; align-items: center; padding: 8px 0 9px; }
.vscroll .up, .vscroll .dn { border-left-width: 7px; border-right-width: 7px; border-top-width: 0; border-bottom-width: 9px; }
.vscroll .dn { border-top-width: 9px; border-bottom-width: 0; }
.vscroll b { width: 24px; height: 24px; background: #919191; margin: 680px 0 auto; }

.status { display: flex; height: 25px; border-top: 2px solid #252525; align-items: stretch; line-height: 26px; }
.zoomf, .pagef { background: #a2a2a2; color: #0a0a0a; padding-left: 5px; width: 64px; margin-left: 6px; flex: none; font-size: 14px; }
.pagef { margin-left: 0; }
.box { width: 23px; background: #555; display: flex; align-items: center; justify-content: center; flex: none; border-left: 1px solid #252525; }
.mode { width: 308px; text-align: center; border: solid #333; border-width: 0 2px; padding-right: 0; padding-left: 2px; }
.hscroll { flex: 1; background: #343434; display: flex; border-left: 2px solid #252525; }
.hscroll b { width: 23px; background: #919191; margin: 0 847px 0 967px; }
.corner { width: 26px; background: #4d4d4d; border: solid #252525; border-width: 0 2px; }

.dock { width: 386px; border-left: 1.500px solid #222; border-right: 1.500px solid #222; flex: none; height: 1470px; display: flex; flex-direction: column; }
.dockbar { height: 18.500px; background: #333; border-top: 2px solid #1f1f1f; display: flex; justify-content: flex-end; align-items: center; padding-right: 4px; }
.panel { border-bottom: 2px solid #222; flex: none; }
.stroke { height: 511px; }
.swatches { height: 640px; margin-top: 1px; }
.color { height: 299px; }
.tabs { height: 27px; background: #2d2d2d; display: grid; border-top: 1.500px solid #555; }
.tabs > b { font-size: 13.200px; line-height: 25px; color: #8f8f8f; padding-left: 11px; overflow: hidden; white-space: nowrap; border-right: 1.500px solid #1c1c1c; border-bottom: 1.500px solid #5a5a5a; }
.tabs > b.on { background: #474747; color: #e6e6e6; border-bottom: 0; display: flex; align-items: center; gap: 5px; padding-left: 7px; }
.tabs > i { border-bottom: 1.500px solid #5a5a5a; }
.t1 > b.on, .t3 > b.on { font-size: 13.700px; }
.t1 { grid-template-columns: 71px 61px 62px 61px 67px 61px; }
.t2 { grid-template-columns: 62px 51px 61px 86px 62px 61px; }
.t3 { grid-template-columns: 71px 73px 94px 81px 3px 61px; }
.t2 > b.on { padding-left: 10px; }
.burger { background: linear-gradient(#c8c8c8, #c8c8c8) 34px 7px/12px 2px no-repeat, linear-gradient(#c8c8c8, #c8c8c8) 34px 11px/12px 2px no-repeat, linear-gradient(#c8c8c8, #c8c8c8) 34px 15px/12px 2px no-repeat, linear-gradient(#c8c8c8, #c8c8c8) 26px 11px/6px 3px no-repeat; }
.stroke .tabs { margin-bottom: 5px; }
.prow { display: flex; align-items: center; position: relative; }
.prow label { width: 105px; text-align: right; margin-right: 7px; flex: none; white-space: nowrap; letter-spacing: -.1px; }
.h40 { height: 40px; } .h45 { height: 45px; } .h46 { height: 46px; } .h44 { height: 44px; }
.second { margin-left: 17px; }
.seg { display: flex; height: 29px; border: 1.500px solid #252525; }
.seg b { width: 35.500px; background: #606060; display: flex; align-items: center; justify-content: center; border-right: 1px solid #252525; }
.seg b:last-child { border-right: 0; }
.seg b.on { background: #303030; }
.lim { margin-left: 11px; width: 51px; }
.f4 { width: 56px; flex: none; height: 29px; border: 1.500px solid #252525; }
.x { margin-left: 7px; }
.panel hr { border: 0; height: 2px; background: #363636; border-bottom: 1px solid #555; margin: 4px 28px 4px 8px; }
.dash { height: 43px; padding-left: 9px; }
.check { width: 19px; height: 18px; background: #606060; border: 1.500px solid #222; margin-right: 7px; }
.seg.off { margin-left: auto; margin-right: 31px; height: 30px; border-color: #333; }
.seg.off b { width: 59px; background: #555; }
.gaps { display: flex; gap: 3px; padding: 4px 0 0 9px; height: 60px; color: #959595; font-size: 13.400px; }
.gaps span { width: 53px; text-align: center; line-height: 22px; }
.gaps span::before { content: ""; display: block; height: 29px; background: #787878; border: 1.500px solid #2c2c2c; }
.ic { margin-left: 30px; }
.dim { color: #8c8c8c; }
.dim .combo em { background: #777; color: #222; }
.dim .spin::before { border-bottom-color: #999; }
.dim .spin::after { border-top-color: #999; }
.dim .seg b { background: #555; }
.flip { margin-left: 16px; }

.swbody { margin: 9px 9px 0 8px; height: 570px; border: 1.500px solid #2a2a2a; display: flex; }
.swlist { width: 347px; flex: none; }
.grid { display: grid; grid-template-columns: repeat(16, 20px); gap: 1.600px 1.540px; height: 65px; grid-auto-rows: 20px; background: #5a5a5a; width: 345px; }
.grid.short { height: 20px; margin-top: 4px; width: max-content; grid-template-columns: repeat(4, 20px); }
.grid.short:last-child { grid-template-columns: repeat(12, 20px); }
.none { background: linear-gradient(135deg, #fff 43%, #f00 43% 57%, #fff 57%); }
.reg { background: radial-gradient(circle, #fff 0 2px, #222 2px 3px, #fff 3px 6px, #222 6px 7.500px, #eee 7.500px); position: relative; }
.reg::after { content: ""; position: absolute; inset: 0; background: linear-gradient(#222, #222) 50% 50%/20px 1.500px no-repeat, linear-gradient(#222, #222) 50% 50%/1.500px 20px no-repeat; }
.sel { background: #22b573; border: 2px solid #fff; box-shadow: inset 0 0 0 2px #000; }
.folder { background: linear-gradient(#c4c4c4, #c4c4c4) 2px 7px/16px 9px no-repeat, linear-gradient(#c4c4c4, #c4c4c4) 2px 4px/8px 4px no-repeat, #4a4a4a; }
.swscroll { flex: 1; background: #333; display: flex; flex-direction: column; justify-content: space-between; align-items: center; padding: 7px 0; opacity: .7; }
.swfoot { margin-top: 3px; }
.colrow { display: flex; align-items: center; height: 52px; padding-left: 8px; }
.quick { display: flex; width: 61px; height: 22px; border: 1.500px solid #222; }
.quick i { flex: 1; } .quick .k { background: #000; } .quick .w { background: #fff; }
.colrow span { margin-left: 188px; width: 18px; color: #ddd; }
.colrow .fld { flex: none; width: 82px; height: 29px; border: 1.500px solid #252525; font-size: 13.800px; }
.spectrum { width: 347px; height: 212px; margin-left: 10px; border: 1.500px solid #222; background: linear-gradient(#fff, #fff0 50%, #0000 50%, #000), linear-gradient(90deg, #f00, #ff0 16.700%, #0f0 33.300%, #0ff 50%, #00f 66.700%, #f0f 83.300%, #f00); }

.taskbar { height: 77px; background: #1d1610; display: flex; align-items: center; color: #fff; font: 21px "Open Sans", sans-serif; }
.icons { display: flex; width: 1903px; margin-left: -1px; }
.icons span { width: 95.300px; height: 77px; display: flex; align-items: center; justify-content: center; flex: none; }
.icons svg { width: 46px; height: 46px; }
.icons .run { background: linear-gradient(#76b9ed, #76b9ed) 8px 72px/79px 5px no-repeat; }
.icons .active { background: linear-gradient(#76b9ed, #76b9ed) 0 72px/95px 5px no-repeat, #4d4540; }
.adobe { width: 44px; height: 42px; border: 3px solid; font: 700 23px/34px "Open Sans", sans-serif; text-align: center; }
.id { color: #ee3d96; background: #2d0519; } .ps { color: #7fc0f8; background: #0c0838; } .ai { color: #f9a32a; background: #2a1804; }
.tray { margin-left: 445px; }
.lang { margin-left: 8px; width: 61px; }
.clock { width: 132px; text-align: center; font-size: 21.500px; line-height: 35px; padding-bottom: 1px; }
.clock span { display: block; }
.notif { position: relative; margin-left: 22px; height: 30px; }
.notif b { position: absolute; left: 17px; top: 14px; width: 30px; height: 30px; border-radius: 50%; background: #4a4642; border: 2px solid #777; font-size: 18px; line-height: 26px; text-align: center; }

.tools { position: absolute; left: 291px; top: 541px; width: 109px; height: 795px; background: #474747; border: 1px solid #222; box-shadow: 0 0 5px #0006; display: flex; flex-direction: column; }
.toolhead { height: 20px; background: #303030; border-bottom: 1px solid #222; display: flex; align-items: center; justify-content: flex-end; padding-right: 1px; flex: none; }
.grip2 { width: 29px; height: 5px; margin: 8px auto 10px 38px; background: repeating-linear-gradient(90deg, #1c1c1c 0 2px, #555 2px 3px); flex: none; }
.tg { display: grid; grid-template-columns: 47px 47px; grid-auto-rows: 37px; padding-left: 6px; flex: none; }
.tg span { display: flex; align-items: center; justify-content: center; position: relative; }
.tg svg { width: 29px; height: 28px; }
.tg .on { background: #2f2f2f; box-shadow: inset 0 0 0 1px #222; margin: 2px; }
.tg .f::after { content: ""; position: absolute; right: 3px; bottom: 1px; border: solid transparent; border-width: 5px 0 0 5px; border-bottom: 5px solid #ddd; border-top: 0; }
.tools hr { margin: .6px 7px; width: 92px; height: 2px; border: 0; background: #363636; border-bottom: 1px solid #585858; flex: none; }
.fillstroke { margin: -1px 0 0 -1px; }

.dropdown { position: absolute; left: 432px; top: 488px; width: 574px; height: 960px; background: #f1f1f1; border: 1px solid #bbb; border-bottom: 3px solid #111; border-right: 2px solid #777; padding: 4px 1px 0 2px; list-style: none; font: 13.200px/22.200px "Open Sans", sans-serif; color: #111; }
.dropdown li { height: 22.200px; display: flex; justify-content: space-between; padding: 0 19px 0 31px; position: relative; white-space: nowrap; }
.dropdown .sep { height: 6.300px; }
.dropdown .line { background: linear-gradient(#d0d0d0, #d0d0d0) 28px 2px/100% 2px no-repeat; }
.dropdown .hot { background: #91c9f7; }
.dropdown .ck { background: linear-gradient(#91c9f7, #91c9f7) 0 0/22px 100% no-repeat; }
.dropdown .ck::before { content: ""; position: absolute; left: 8px; top: 4px; width: 5px; height: 10px; border: solid #223; border-width: 0 1.600px 1.600px 0; transform: rotate(40deg); }
.dropdown .sub::after { content: ""; position: absolute; right: 11px; top: 8px; width: 5px; height: 5px; border: solid #333; border-width: 1.300px 1.300px 0 0; transform: rotate(45deg); }

.callouts { position: absolute; left: -2px; top: -2px; }
.note { position: absolute; left: 600px; top: 1754px; font: italic 700 47.500px/60px "Open Sans", sans-serif; letter-spacing: .35px; color: #0ff; white-space: nowrap; }
```
